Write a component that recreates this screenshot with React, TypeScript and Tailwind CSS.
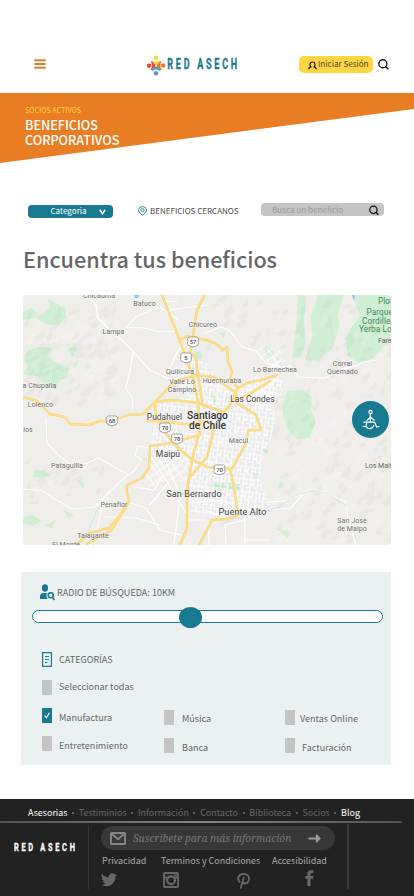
import React from "react";

const sans = "font-['Noto_Sans_CJK_SC','Open_Sans',sans-serif]";

function Search({ className }: { className: string }) {
  return (
    <svg viewBox="0 0 12 12" className={className} fill="none" stroke="#111" strokeWidth="1.5">
      <circle cx="5.3" cy="5.2" r="4.4" />
      <path d="M8.2 8.2 11.3 11.2" strokeWidth="1.8" />
    </svg>
  );
}

function Logo() {
  return (
    <svg width="94" height="22" viewBox="146 54 94 22">
      <path d="M152.3 60.3 154.6 61.5H157.6L160 60.3 160.6 62 158 65H154.4L151.8 62Z" fill="#f9d648" />
      <path d="M150.6 61.8 152 61.6 155.3 64.8V67L151.8 70.3 150.4 69.6 151.8 67.6V64Z" fill="#e54b35" />
      <path d="M161.8 61.8 160.4 61.6 157 64.8V67L160.6 70.3 162 69.6 160.4 67.6V64Z" fill="#e87d24" />
      <path d="M152.3 71.2 154.6 69.8H157.6L160 71.2 160.6 69.5 157.6 66.6H154.6L151.8 69.5Z" fill="#559dba" />
      <circle cx="156" cy="57.8" r="2.3" fill="#f9d648" />
      <circle cx="149" cy="65.7" r="2.3" fill="#e54b35" />
      <circle cx="163.1" cy="65.5" r="2.3" fill="#e87d24" />
      <circle cx="156" cy="73.3" r="2.3" fill="#559dba" />
      <text transform="translate(167.3 69) scale(.64 1)" fontFamily="Roboto, sans-serif" fontWeight="700" fontSize="14" letterSpacing="4.35" fill="#177a91" stroke="#177a91" strokeWidth=".35">
        RED ASECH
      </text>
    </svg>
  );
}

function Header() {
  return (
    <header className="flex h-[93px] items-start bg-white">
      <svg className="ml-[34px] mt-[59px]" width="12" height="10" viewBox="0 0 12 10" fill="none" stroke="#e87d24" strokeWidth="1.9" strokeLinecap="round">
        <path d="M1 1.2H11M1 5H11M1 8.8H11" />
      </svg>
      <div className="ml-[100px] mt-[54px]"><Logo /></div>
      <button className={`${sans} ml-[59px] mt-[56px] flex h-[17px] w-[74px] items-center rounded-[5px] bg-[#ffd542] pl-[9px] text-[8.1px] leading-none text-[#4d4934]`}>
        <svg width="9" height="9" viewBox="0 0 9 9" fill="none" stroke="#111" strokeWidth="1.2" className="mt-px shrink-0">
          <path d="M3.2 6C1 4.3 1.7 1 4.5 1S8 4.3 5.8 6M3.4 5.8C1.6 6 .8 6.8.7 8.3M5.6 5.8C7.4 6 8.2 6.8 8.3 8.3" />
        </svg>
        <span className="whitespace-nowrap pl-px">Iniciar Sesión</span>
      </button>
      <Search className="ml-[5px] mt-[59px] h-[11px] w-[11px]" />
    </header>
  );
}

function Banner() {
  return (
    <section className={`${sans} h-[70px] bg-[#e87d24] pl-[25px] pt-[13px] [clip-path:polygon(0_0,100%_0,100%_16px,0_70px)]`}>
      <p className="text-[7px] font-medium leading-[9px] text-[#fbc636]">SOCIOS ACTIVOS</p>
      <h1 className="mt-[2px] text-[12.6px] font-medium leading-[15px] text-white">
        <span className="block">BENEFICIOS</span>
        <span className="block">CORPORATIVOS</span>
      </h1>
    </section>
  );
}

function Filters() {
  return (
    <div className={`${sans} mt-[40px] flex h-[15px] items-start text-[8.1px] leading-none`}>
      <button className="ml-[28px] mt-[2px] flex h-[13px] w-[85px] items-center rounded-[4px] bg-[#177a91] pb-px pl-[22px] text-white">
        <span className="w-[37px]">Categoria</span>
        <svg width="7" height="6" viewBox="0 0 7 6" className="ml-[12px] mt-px" fill="none" stroke="#fff" strokeWidth="1.6"><path d="M.8.7 3.5 4.7 6.2.7" /></svg>
      </button>
      <svg width="9" height="10" viewBox="0 0 9 10" className="ml-[25px] mt-[3px]" fill="none" stroke="#177a91">
        <path strokeWidth=".9" d="M4.5 9.4C3.2 7.8.5 6.2.5 4.2a4 3.7 0 0 1 8 0c0 2-2.7 3.6-4 5.2Z" />
        <circle cx="4.5" cy="4" r="1.6" strokeWidth=".8" />
      </svg>
      <span className="ml-[3px] mt-[4px] w-[89px] whitespace-nowrap text-[8px] text-[#4c4c4c]">BENEFICIOS CERCANOS</span>
      <div className="ml-[22px] flex h-[13px] w-[123px] items-center rounded-[4px] bg-[#c4c4c4] pl-[11px] text-[#9c9c9c]">
        <span className="mt-px w-[97px]">Busca un beneficio</span>
        <Search className="mt-px h-[11px] w-[10px]" />
      </div>
    </div>
  );
}

type Label = [string, number, number, number, string?];
const labels: Label[] = [
  ["Chicauma", 99, 298, 7], ["Batuco", 144.5, 306, 7], ["Lampa", 113.5, 334, 7], ["Chicureo", 203, 327, 7],
  ["Quilicura", 180, 374, 7], ["Valle Lo", 182, 384, 7], ["Campino", 182, 391.5, 7], ["Huechuraba", 222, 383, 7],
  ["Lo Barnechea", 275, 371.5, 7], ["Las Condes", 252.5, 402, 8.3, "#444"], ["a Chupalla", 39.5, 387.5, 7],
  ["Lolenco", 40.5, 406.5, 7], ["Pudahuel", 164.5, 420, 8.3, "#444"], ["Macul", 238.5, 442.5, 7],
  ["Maipú", 168, 456.5, 8.6, "#444"], ["los", 28, 432, 7], ["Pataguilla", 67, 468, 7], ["Penaflor", 114, 507, 7],
  ["San Bernardo", 194, 496.5, 9.1, "#444"], ["Puente Alto", 242.5, 514.5, 9.1, "#444"], ["Talagante", 93, 537.5, 7],
  ["El Monte", 66, 547, 7], ["San José", 352, 523, 7], ["de Maipo", 352, 530.5, 7], ["Corral", 342.5, 366, 7],
  ["Quemado", 342.5, 374, 7],
];
const shields: [string, number, number][] = [["57", 193, 342], ["5", 186, 358], ["68", 112, 421], ["70", 165, 428], ["78", 177, 439], ["70", 219.5, 470]];

const greens = [
  "M23 312 32 308 40 315 50 308 48 298 57 304 65 308 66 318 58 325 46 324 35 318 23 320Z",
  "M28 350 40 347 52 348 48 356 58 364 69 367 68 377 60 380 56 390 45 384 37 376 23 374 28 366 23 359Z",
  "M68 350 75 343 77 350 72 357ZM73 366 79 357 76 368Z",
  "M23 518 32 514 42 521 33 526 23 523ZM63 509 74 516 68 518ZM44 526 56 520 52 528Z",
  "M34 470 44 471 50 476 43 478 33 477ZM77 480 84 482 83 489Z",
  "M298 295 306 296 304 322 306 342 301 358 292 358 296 330Z",
  "M318 295 344 295 337 315 340 326 331 350 316 361 305 360 312 338 311 315Z",
  "M352 295 391 295 391 340 373 358 359 363 347 355 346 336 360 315Z",
  "M287 391 303 390 312 397 311 410 316 422 309 438 297 439 287 428 282 410Z",
  "M191 354 200 351 203 356 198 366 193 361Z",
  "M265 346 274 351 272 357 266 353ZM219 333 226 332 224 338Z",
  "M275 528 291 532 288 538ZM281 480 284 486 278 489Z",
];
const parks = "M212 482 226 483 226 488 212 487ZM228 481 240 484 239 491 227 490ZM252 471 259 475 256 479ZM210 395 217 398 215 404ZM262 449 269 450 266 454Z";

const whites = [
  "M87 295 96 305 98 318 111 331 126 344 150 370 169 379 180 379", "M126 327 137 316 160 307 177 319M126 327 145 328 160 332 177 331",
  "M133 352 130 370 126 388 133 400 132 410", "M46 418 47 443 58 455 76 468 94 460 99 458 128 475 133 472 142 460 135 455 138 446 149 448",
  "M23 489 43 491 53 498 72 509 95 507 110 491 128 475", "M103 503 98 526 90 545M128 502 146 508 160 530 181 535M105 517 136 518 160 525",
  "M205 333 221 327 229 330 242 347 256 351 266 363 280 367 291 366 298 377 325 378 342 369 356 366 363 362 377 360",
  "M268 502 287 501 299 495 312 489 328 494 346 502 348 519 356 545", "M225 525 253 518 271 510 291 508 302 495",
  "M245 519 245 545M225 525 226 545M245 540 269 540M209 524 209 545", "M150 455 168 483 187 515M160 448 178 490M134 487 154 490 160 480",
  "M168 483 150 505M181 490 174 545M230 520 205 510M187 503 226 500M188 520 205 520", "M165 301 177 302M168 310 207 305M169 370 178 350 194 340",
];

const yellows = [
  "M162 295 175 328 186 357 193 377 198 403 200 430 192 460 187 490 187 528 180 545",
  "M205 295 197 310 194 327 193 341 190 352 196 358 198 376 203 406",
  "M180 340 187 336 206 340 215 343 223 350 227 347 228 362 232 372 230 379 237 387",
  "M277 375 261 380 247 383 237 389 234 398 229 407 223 412 198 403",
  "M112 421 128 415 143 414 155 402 170 400 182 401 198 403",
  "M23 397 37 401 50 414 65 417 70 424 89 425 100 421 112 421",
  "M148 421 158 421 173 443 190 458 207 467 232 469 245 445 249 430 261 430 256 415 237 403 236 393 214 377 195 375 173 383 155 402 156 420",
  "M172 443 150 446 149 468 142 478 127 485 127 493 129 500 120 515 109 528 90 533 77 544",
  "M129 502 112 530 87 544", "M155 420 190 425 207 421", "M177 441 200 435M190 477 207 457 213 434 212 423",
  "M230 470 234 487 238 515 227 519 212 520 207 530 199 545", "M237 400 251 393 270 381",
];

function rand(seed: number) {
  let s = seed;
  return () => ((s = (s * 16807) % 2147483647) / 2147483647);
}

function facets(seed: number, n: number, x0: number, y0: number, w: number, h: number) {
  const r = rand(seed);
  return Array.from({ length: n }, () => {
    const x = x0 + r() * w, y = y0 + r() * h, a = 3 + r() * 8, b = 3 + r() * 8;
    return `M${x.toFixed(1)} ${y.toFixed(1)}l${a.toFixed(1)} ${(-b).toFixed(1)} ${(a * 0.2).toFixed(1)} ${(b * 0.7).toFixed(1)} ${(-a * 0.6).toFixed(1)} ${(b * 0.6).toFixed(1)}z`;
  }).join("");
}
const shade = facets(77, 90, 23, 312, 88, 95) + facets(31, 20, 23, 460, 80, 45) + facets(991, 150, 270, 305, 118, 238) + facets(15, 14, 205, 300, 65, 50);
const light = facets(512, 70, 23, 310, 88, 95) + facets(873, 120, 270, 305, 118, 238);

const city = "M168 372 194 357 208 364 218 380 240 385 250 378 277 374 284 381 282 391 272 400 276 420 270 440 262 455 260 478 268 505 250 512 225 520 190 512 188 470 164 452 148 450 153 432 155 412 160 400 190 398Z";

function CityMap() {
  return (
    <svg width="368" height="250" viewBox="23 295 368 250" className="block rounded-[4px]">
      <defs>
        <pattern id="streets" width="7.3" height="12.7" patternUnits="userSpaceOnUse" patternTransform="rotate(7)">
          <path d="M0 1H7.3M0 5.5H4M3.6 9H7.3M1 0V12.7M4.2 1V7.5" stroke="#fff" strokeWidth="1" />
        </pattern>
        <pattern id="blocks" width="9" height="7" patternUnits="userSpaceOnUse" patternTransform="rotate(-35)">
          <path d="M0 1H9M1 0V7" stroke="#fff" strokeWidth="1.1" />
        </pattern>
      </defs>
      <path d="M23 295H391V545H23Z" fill="#f0eeea" />
      {greens.map((d) => <path key={d} d={d} fill="#cfeed3" />)}
      <path d={shade} fill="#8a8d86" opacity=".055" />
      <path d={light} fill="#fff" opacity=".15" />
      <path d={city} fill="#ebebec" />
      <path d={parks} fill="#c3e9c9" />
      <path d={city} fill="url(#streets)" />
      <path d="M150 450 165 449 187 469 187 482 165 480 150 488 145 481ZM258 347 280 350 284 368 272 371ZM237 389 277 377 272 399 245 405Z" fill="url(#blocks)" />
      <g fill="none" strokeLinejoin="round" strokeLinecap="round">
        {whites.map((d) => <path key={d} d={d} stroke="#fff" strokeWidth="1.2" />)}
        <path d="M220 525 235 518 257 514 279 507 295 496 312 490 329 494 347 506M149 461 144 458 140 464M98 507 88 533" stroke="#c3dff0" strokeWidth=".7" />
        {yellows.map((d) => <path key={d} d={d} stroke="#f6d273" strokeWidth="2.4" />)}
        {yellows.map((d) => <path key={d} d={d} stroke="#ffdf85" strokeWidth="1.3" />)}
      </g>
      <path d="M134 295h5l-1 3h-3zM352 295h3l-1 6z" fill="#8cc5ef" />
      {shields.map(([t, x, y], i) => (
        <g key={i}>
          <path d={`M${x - 4} ${y - 5}h8q1.6.6 1.4 2.2-.7 2 .2 4-.2 2.6-3 2.8l-2.6 1-2.6-1q-2.8-.2-3-2.8.9-2 .2-4-.2-1.6 1.4-2.2`} fill="#fff" stroke="#888" strokeWidth=".8" />
          <text x={x} y={y + 1.7} textAnchor="middle" fontFamily="Roboto, sans-serif" fontSize="5.8" fontWeight="500" fill="#444">{t}</text>
        </g>
      ))}
      <g fontFamily="Roboto, sans-serif" textAnchor="middle" stroke="#fff" strokeOpacity=".5" strokeWidth="1" paintOrder="stroke">
        {labels.map(([t, x, y, s, c]) => <text key={t} x={x} y={y} fontSize={s} letterSpacing=".1" fill={c ?? "#6b6b6b"}>{t}</text>)}
        <g fontSize="10.3" fontWeight="500" fill="#333"><text x="207.5" y="419">Santiago</text><text x="207.5" y="429.3">de Chile</text></g>
      </g>
      <g fontFamily="Roboto, sans-serif" fontSize="8.2" fill="#3b8a55" letterSpacing=".1">
        <text x="378" y="303.5">Plomo</text><text x="366.5" y="315">Parque</text><text x="362" y="323.5">Cordillera</text><text x="359" y="332">Yerba Loca</text>
      </g>
      <g fontFamily="Roboto, sans-serif" fontSize="7" fill="#666"><text x="378" y="343">Farellones</text><text x="365" y="468">Los Maitenes</text></g>
    </svg>
  );
}

function AccessButton() {
  return (
    <button className="absolute left-[329px] top-[106px] flex h-[37px] w-[37px] items-center justify-center rounded-full bg-[#177a91]">
      <svg width="20" height="22" viewBox="0 0 20 22" fill="none" stroke="#fff" strokeWidth="1.2" strokeLinejoin="round" strokeLinecap="round">
        <circle cx="9.5" cy="3" r="1.6" />
        <path d="M9.3 5V8.2L6 11.4M9.6 8.2l3.8 3M9.3 8.5V13.2H13.6L15.8 18.2 18 17.3M9 13.2H3M5.6 14.6c-1.6 2.6.2 5 3 5 2 0 3.6-1.2 4.2-3.2M2 17.5H5" />
      </svg>
    </button>
  );
}

function Option({ label, checked, text = "" }: { label: string; checked?: boolean; text?: string }) {
  return (
    <div className="flex h-[15px] items-start">
      <span className={`flex h-[15px] w-[10px] shrink-0 items-center justify-center ${checked ? "bg-[#177a91]" : "bg-[#c4c4c4]"}`}>
        {checked && <svg width="6" height="7" viewBox="0 0 6 7" fill="none" stroke="#fff" strokeWidth="1.1"><path d="M.6 3.6 2.4 5.8 5.4.8" /></svg>}
      </span>
      <span className={`whitespace-nowrap leading-[12px] ${text}`}>{label}</span>
    </div>
  );
}

function Panel() {
  return (
    <section className={`${sans} ml-[21px] mt-[27px] h-[193px] w-[370px] bg-[#ebf1f1] text-[9.05px] text-[#666]`}>
      <div className="flex h-[38px] items-start pl-[19px] pt-[12px]">
        <svg width="15" height="17" viewBox="0 0 15 17" fill="#177a91">
          <ellipse cx="5" cy="4" rx="3.1" ry="3.8" />
          <path d="M0 15v-2.5Q0 9 3.5 9H7q-1.3 3.5.7 6Z" />
          <circle cx="10.7" cy="11.2" r="2.5" fill="none" stroke="#177a91" strokeWidth="1.5" />
          <path d="M12.2 13.2 14.4 16" stroke="#177a91" strokeWidth="1.7" />
        </svg>
        <span className="ml-[2px] mt-[3px] leading-[12px]">RADIO DE BÚSQUEDA: 10KM</span>
      </div>
      <div className="relative ml-[11px] h-[13px] w-[351px] rounded-full border border-[#177a91] bg-white">
        <span className="absolute left-[146px] top-[-4px] h-[21px] w-[23px] rounded-[50%] bg-[#177a91]" />
      </div>
      <div className="flex items-start pl-[21px] pt-[29px]">
        <svg width="10" height="15" viewBox="0 0 10 15" fill="none" stroke="#177a91">
          <path d="M.6.6H9.4V14.4H.6Z" strokeWidth="1.2" />
          <path d="M3 4.5H7M3 7.5H7M3 10.5H5.5" strokeWidth="1" />
        </svg>
        <span className="ml-[7px] mt-[2px] leading-[12px]">CATEGORÍAS</span>
      </div>
      <div className="pl-[21px] pt-[13px]"><Option label="Seleccionar todas" text="ml-[7px] mt-px" /></div>
      <div className="flex pl-[21px] pt-[13px]">
        <div className="w-[122px] space-y-[13px]">
          <Option label="Manufactura" checked text="ml-[7px] mt-[4px]" />
          <Option label="Entretenimiento" text="ml-[7px] mt-[4px]" />
        </div>
        <div className="w-[121px] space-y-[13px] pt-[2px]">
          <Option label="Música" text="ml-[8px] mt-[3px]" />
          <Option label="Banca" text="ml-[8px] mt-[4px]" />
        </div>
        <div className="space-y-[13px] pt-[2px]">
          <Option label="Ventas Online" text="ml-[5px] mt-[3px]" />
          <Option label="Facturación" text="ml-[7px] mt-[4px]" />
        </div>
      </div>
    </section>
  );
}

function Dot() {
  return <span className="mt-[5px] h-[2px] w-[2px] rounded-full bg-[#777]" />;
}

function Footer() {
  const dim = ["Testiminios", "Información", "Contacto", "Biblioteca", "Socios"];
  return (
    <footer className={`${sans} mt-[34px] h-[97px] bg-[#222] text-[8.95px]`}>
      <nav className="flex h-[22px] w-[360px] items-start justify-between whitespace-nowrap pl-[28px] pt-[8px] leading-[12px] text-[#666]">
        <span className="text-white">Asesorias</span>
        {dim.map((t) => <React.Fragment key={t}><Dot /><span>{t}</span></React.Fragment>)}
        <Dot /><span className="text-white">Blog</span>
      </nav>
      <div className="h-[2px] w-[402px] bg-gradient-to-r from-[#505050] via-[#858585] to-[#505050]" />
      <div className="flex">
        <svg width="88" height="73" viewBox="0 823 88 73">
          <text transform="translate(14 850.8) scale(.64 1)" fontFamily="Roboto, sans-serif" fontWeight="700" fontSize="11.6" letterSpacing="4.2" fill="#fff" stroke="#fff" strokeWidth=".3">RED ASECH</text>
        </svg>
        <div className="mt-[2px] h-[64px] w-px bg-[#383838]" />
        <div className="ml-[12px] mt-[3px] w-[246px]">
          <div className="flex h-[24px] w-[234px] items-center rounded-full bg-[#383838] pl-[9px]">
            <svg width="16" height="13" viewBox="0 0 16 13" fill="none" stroke="#858585" strokeWidth="1.9" strokeLinejoin="round"><rect x="1" y="1" width="14" height="11" rx=".6" /><path d="M1.5 1.5 8 7.2 14.5 1.5" /></svg>
            <span className="ml-[7px] w-[175px] whitespace-nowrap pt-px font-['Noto_Serif','Liberation_Serif',serif] text-[10.3px] italic text-[#777]">Suscribete para más información</span>
            <svg width="13" height="9" viewBox="0 0 13 9" fill="#999"><path d="M.8 3.4H7.8V1.2Q8.2.1 9.3.8L12.8 4.5 9.3 8.2Q8.2 8.9 7.8 7.8V5.6H.8Q-.3 4.5.8 3.4Z" /></svg>
          </div>
          <div className="mt-[5px] flex whitespace-nowrap pl-[1px] leading-[12px] text-[#aaa]">
            <span className="w-[59px]">Privacidad</span><span className="w-[111px]">Terminos y Condiciones</span><span>Accesibilidad</span>
          </div>
          <div className="flex items-start text-[#686868]">
            <svg className="mt-[6px]" width="16" height="14" viewBox="0 2.5 24 19.5" fill="currentColor"><path d="M23.95 4.57a10 10 0 0 1-2.82.78 4.96 4.96 0 0 0 2.16-2.73c-.95.56-2 .96-3.13 1.18a4.92 4.92 0 0 0-8.38 4.49A13.98 13.98 0 0 1 1.64 3.16a4.92 4.92 0 0 0 1.52 6.57 4.9 4.9 0 0 1-2.23-.61v.06a4.92 4.92 0 0 0 3.95 4.83 5 5 0 0 1-2.21.08 4.94 4.94 0 0 0 4.6 3.42A9.87 9.87 0 0 1 0 19.54a13.99 13.99 0 0 0 7.55 2.21c9.05 0 14-7.5 14-13.99 0-.21 0-.42-.02-.63a9.94 9.94 0 0 0 2.46-2.55z" /></svg>
            <svg className="ml-[46px] mt-[5px]" width="16" height="16" viewBox="0 0 16 16" fill="none" stroke="currentColor"><rect x="1" y="1" width="14" height="14" rx="1" strokeWidth="1.9" /><circle cx="8" cy="8.3" r="3.9" strokeWidth="2.2" /><path d="M1 5.6h3.6M11.4 5.6H15M11 3.3h3" strokeWidth="1.7" /></svg>
            <svg className="ml-[58px] mt-[6px]" width="13" height="16" viewBox="0 0 13 16" fill="none" stroke="currentColor" strokeWidth="1.8" strokeLinecap="round"><path d="M2.5 8.8C-.4 5.8 1.6 1 6.6 1c4 0 5.8 2.8 5.2 5.8-.6 3.5-4.3 4.8-6 2.5M6.8 4.5 3.8 15" /></svg>
            <svg className="ml-[55px] mt-[3px]" width="9" height="16" viewBox="0 0 9 16" fill="currentColor"><path d="M2.4 16V8.8H.3V5.9h2.1V4c0-2.7 1.4-4 3.8-4L8.5.2v2.7H7C5.7 2.9 5.5 3.5 5.5 4.4v1.5h3l-.4 2.9H5.5V16Z" /></svg>
          </div>
        </div>
        <div className="mt-px h-[65px] w-[2px] bg-[#383838]" />
      </div>
    </footer>
  );
}

export default function App() {
  return (
    <main className="h-[896px] w-[414px] overflow-hidden bg-white">
      <Header />
      <Banner />
      <Filters />
      <h2 className={`${sans} ml-[23px] mt-[26px] h-[51px] text-[21.6px] font-medium leading-[30px] text-[#666]`}>Encuentra tus beneficios</h2>
      <div className="relative ml-[23px] w-[368px]"><CityMap /><AccessButton /></div>
      <Panel />
      <Footer />
    </main>
  );
}
